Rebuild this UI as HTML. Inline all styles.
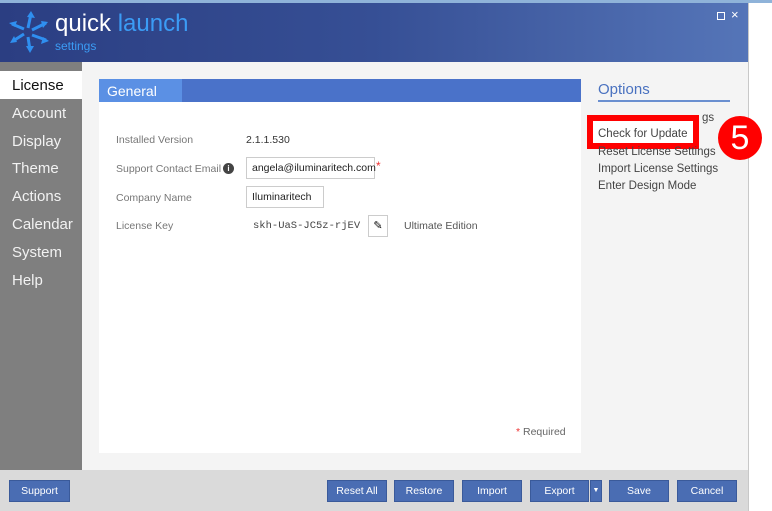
<!DOCTYPE html>
<html><head><style>
*{margin:0;padding:0;box-sizing:border-box}
body{width:772px;height:511px;position:relative;overflow:hidden;background:#fff;font-family:"Liberation Sans",sans-serif}
.abs{position:absolute}
.hdr{left:0;top:3px;width:748px;height:59px;background:linear-gradient(90deg,#2b3e82 0%,#364f95 50%,#5575b8 100%)}
.side{left:0;top:62px;width:82px;height:408px;background:#7f7f7f}
.side div{position:absolute;left:12px;color:#f2f2f2;font-size:15px}
.main{left:82px;top:62px;width:666px;height:408px;background:#f4f4f4}
.panel{left:99px;top:79px;width:482px;height:374px;background:#fff}
.lbl{color:#777;font-size:10.5px}
.inp{border:1px solid #ccc;background:#fff;font-size:10.5px;color:#222;padding:0 5px;height:22px;line-height:20px;white-space:nowrap}
.foot{left:0;top:470px;width:748px;height:41px;background:#dadada}
.btn{top:480px;height:22px;background:#4a6db3;border:1px solid #3a5a9a;color:#fff;font-size:10.5px;text-align:center;line-height:20px}
.opt{left:598px;font-size:11.5px;color:#444;white-space:nowrap}
</style></head><body>
<div class="abs" style="left:0;top:0;width:772px;height:3px;background:#8fb3d9"></div>
<div class="abs hdr"></div>
<svg class="abs" style="left:8px;top:10px" width="42" height="44" viewBox="0 0 42 44">
<g stroke="#2f8ff0" stroke-width="3" fill="#2f8ff0">
<line x1="20" y1="18" x2="23" y2="4"/><polygon points="23,1 27,8 19,7" stroke="none"/>
<line x1="24" y1="20" x2="38" y2="13"/><polygon points="40,12 35,18 33,11" stroke="none"/>
<line x1="24" y1="25" x2="38" y2="30"/><polygon points="41,31 33,34 35,27" stroke="none"/>
<line x1="20" y1="27" x2="22" y2="40"/><polygon points="22,43 18,36 26,36" stroke="none"/>
<line x1="16" y1="24" x2="5" y2="31"/><polygon points="2,33 6,26 9,32" stroke="none"/>
<line x1="16" y1="19" x2="4" y2="14"/><polygon points="1,13 9,11 7,17" stroke="none"/>
</g></svg>
<div class="abs" style="left:55px;top:10px;font-size:24px;color:#fff">quick <span style="color:#3b9cf5">launch</span></div>
<div class="abs" style="left:55px;top:39px;font-size:12px;color:#3b9cf5">settings</div>
<div class="abs" style="left:717px;top:12px;width:8px;height:8px;border:1.5px solid #fff"></div>
<div class="abs" style="left:731px;top:7px;color:#fff;font-size:13px">×</div>
<div class="abs" style="left:748px;top:3px;width:1px;height:508px;background:#c8c8c8"></div>
<div class="abs side">
<div style="left:0;top:9px;width:82px;height:28px;background:#fff"></div>
<div style="top:15px;color:#111">License</div>
<div style="top:43px">Account</div>
<div style="top:71px">Display</div>
<div style="top:98px">Theme</div>
<div style="top:126px">Actions</div>
<div style="top:154px">Calendar</div>
<div style="top:182px">System</div>
<div style="top:210px">Help</div>
</div>
<div class="abs main"></div>
<div class="abs panel"></div>
<div class="abs" style="left:99px;top:79px;width:482px;height:23px;background:#4a72c9"></div>
<div class="abs" style="left:99px;top:79px;width:83px;height:23px;background:#5b90e4"></div>
<div class="abs" style="left:107px;top:83px;color:#fff;font-size:14px">General</div>
<div class="abs lbl" style="left:116px;top:134px">Installed Version</div>
<div class="abs" style="left:246px;top:134px;font-size:10.5px;color:#333">2.1.1.530</div>
<div class="abs lbl" style="left:116px;top:163px">Support Contact Email</div>
<div class="abs" style="left:223px;top:163px;width:11px;height:11px;border-radius:50%;background:#444;color:#fff;font-size:8px;text-align:center;line-height:11px;font-weight:bold">i</div>
<div class="abs inp" style="left:246px;top:157px;width:129px">angela@iluminaritech.com</div>
<div class="abs" style="left:376px;top:159px;color:#e33;font-size:12px">*</div>
<div class="abs lbl" style="left:116px;top:192px">Company Name</div>
<div class="abs inp" style="left:246px;top:186px;width:78px">Iluminaritech</div>
<div class="abs lbl" style="left:116px;top:220px">License Key</div>
<div class="abs" style="left:253px;top:220px;font-family:'Liberation Mono',monospace;font-size:10.5px;color:#444">skh-UaS-JC5z-rjEV</div>
<div class="abs" style="left:368px;top:215px;width:20px;height:22px;border:1px solid #ccc;background:#fff;text-align:center;font-size:11px;line-height:20px">✎</div>
<div class="abs lbl" style="left:404px;top:220px;color:#555">Ultimate Edition</div>
<div class="abs lbl" style="left:516px;top:426px;color:#666"><span style="color:#e33">*</span> Required</div>
<div class="abs" style="left:598px;top:81px;font-size:15px;color:#4a72c0">Options</div>
<div class="abs" style="left:598px;top:100px;width:132px;height:2px;background:#6a8fd0"></div>
<div class="abs opt" style="left:702px;top:112px">gs</div>
<div class="abs" style="left:587px;top:115px;width:112px;height:34px;border:6px solid #f00;background:#fff"></div>
<div class="abs opt" style="top:128px">Check for Update</div>
<div class="abs opt" style="top:146px">Reset License Settings</div>
<div class="abs opt" style="top:163px">Import License Settings</div>
<div class="abs opt" style="top:180px">Enter Design Mode</div>
<div class="abs" style="left:718px;top:116px;width:44px;height:44px;border-radius:50%;background:#f00;color:#fff;font-size:34px;text-align:center;line-height:44px">5</div>
<div class="abs foot"></div>
<div class="abs btn" style="left:9px;width:61px">Support</div>
<div class="abs btn" style="left:327px;width:60px">Reset All</div>
<div class="abs btn" style="left:394px;width:60px">Restore</div>
<div class="abs btn" style="left:462px;width:60px">Import</div>
<div class="abs btn" style="left:530px;width:59px">Export</div>
<div class="abs btn" style="left:590px;width:12px;font-size:7px">▼</div>
<div class="abs btn" style="left:609px;width:60px">Save</div>
<div class="abs btn" style="left:677px;width:60px">Cancel</div>
</body></html>
